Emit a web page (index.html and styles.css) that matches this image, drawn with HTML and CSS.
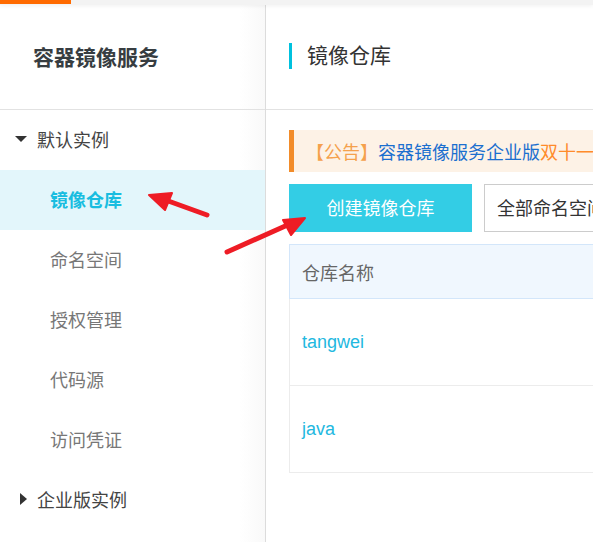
FILE: index.html
```html
<!DOCTYPE html>
<html lang="zh-CN">
<head>
<meta charset="utf-8">
<title>容器镜像服务</title>
<link rel="stylesheet" href="styles.css">
</head>
<body>
<div class="page">
  <div class="topbar"><div class="topbar-accent"></div></div>
  <div class="layout">
    <aside class="sidebar">
      <div class="side-head">容器镜像服务</div>
      <nav class="nav">
        <div class="nav-group"><span class="tri-down"></span>默认实例</div>
        <div class="nav-item active">镜像仓库</div>
        <div class="nav-item">命名空间</div>
        <div class="nav-item">授权管理</div>
        <div class="nav-item">代码源</div>
        <div class="nav-item">访问凭证</div>
        <div class="nav-group"><span class="tri-right"></span>企业版实例</div>
      </nav>
    </aside>
    <main class="main">
      <div class="main-head"><h1 class="main-title">镜像仓库</h1></div>
      <div class="content">
        <div class="notice"><span class="orange">【公告】</span><span class="blue">容器镜像服务企业版</span><span class="orange2">双十一优惠活动进行中</span></div>
        <div class="toolbar">
          <button class="btn-primary">创建镜像仓库</button>
          <div class="select">全部命名空间</div>
        </div>
        <div class="table">
          <div class="th">仓库名称</div>
          <div class="tr"><a class="link">tangwei</a></div>
          <div class="tr"><a class="link">java</a></div>
        </div>
      </div>
    </main>
  </div>
  <svg class="arrows" width="593" height="542" viewBox="0 0 593 542">
    <g fill="#ee1c25" stroke="#ee1c25" stroke-linecap="round" stroke-linejoin="round">
      <line x1="207" y1="215" x2="160" y2="198" stroke-width="5"/>
      <polygon points="149,195 172,193 165,210" stroke-width="2"/>
      <line x1="227" y1="252" x2="292" y2="223" stroke-width="5"/>
      <polygon points="305,218 283,220 291,235" stroke-width="2"/>
    </g>
  </svg>
</div>
</body>
</html>
```
FILE: styles.css
```css
html, body {
  margin: 0;
  padding: 0;
  background: #fff;
}
body {
  font-family: "Liberation Sans", "Noto Sans CJK SC", sans-serif;
  color: #333;
}
.page {
  position: relative;
  width: 593px;
  height: 542px;
  overflow: hidden;
}
.topbar {
  height: 5px;
  background: #f3f3f3;
  box-shadow: 0 1px 4px rgba(0,0,0,0.06);
  position: relative;
  z-index: 1;
}
.topbar-accent {
  width: 71px;
  height: 4px;
  background: #ff6a00;
}
.layout {
  display: flex;
  height: 537px;
}
.sidebar {
  width: 265px;
  flex: none;
  border-right: 1px solid #dcdcdc;
  background: linear-gradient(to right, #fff 0, #fff 240px, #f9f9f9 265px);
}
.side-head {
  height: 105px;
  border-bottom: 1px solid #e2e2e2;
  box-sizing: border-box;
  display: flex;
  align-items: center;
  padding: 0 0 3px 33px;
  font-size: 21px;
  font-weight: bold;
  color: #373d41;
}
.nav {
  display: flex;
  flex-direction: column;
}
.nav-group, .nav-item {
  height: 60px;
  display: flex;
  align-items: center;
  font-size: 18px;
  padding-bottom: 2px;
  box-sizing: border-box;
}
.nav-group {
  color: #444;
}
.nav-item {
  padding-left: 50px;
  color: #777;
}
.nav-item.active {
  background: #e3f6fb;
  color: #19bde0;
  font-weight: bold;
}
.tri-down {
  width: 0;
  height: 0;
  border-left: 6px solid transparent;
  border-right: 6px solid transparent;
  border-top: 6px solid #333;
  margin: 0 10px 0 15px;
}
.tri-right {
  width: 0;
  height: 0;
  border-top: 6px solid transparent;
  border-bottom: 6px solid transparent;
  border-left: 7px solid #333;
  margin: 0 10px 0 20px;
}
.main {
  flex: 1;
  min-width: 0;
}
.main-head {
  height: 105px;
  border-bottom: 1px solid #e2e2e2;
  box-sizing: border-box;
  display: flex;
  align-items: center;
  padding: 0 0 2px 23px;
}
.main-title {
  margin: 0;
  font-size: 21px;
  font-weight: normal;
  color: #333;
  border-left: 3px solid #00c1de;
  padding-left: 15px;
  line-height: 26px;
}
.content {
  padding: 20px 0 0 23px;
  display: flex;
  flex-direction: column;
  align-items: flex-start;
  gap: 12px;
}
.notice {
  height: 42px;
  box-sizing: border-box;
  border-left: 5px solid #f28c2a;
  background: #fdf2e6;
  display: flex;
  align-items: center;
  padding-left: 12px;
  font-size: 18px;
  white-space: nowrap;
  width: 500px;
  flex: none;
}
.orange { color: #f5a14c; }
.blue { color: #1b6fcf; }
.orange2 { color: #ff8b2a; }
.toolbar {
  display: flex;
  gap: 12px;
  height: 48px;
  flex: none;
}
.btn-primary {
  width: 183px;
  flex: none;
  height: 48px;
  border: none;
  background: #33cde5;
  color: #fff;
  font-family: inherit;
  font-size: 18px;
  padding: 0 0 2px;
  white-space: nowrap;
}
.select {
  width: 220px;
  flex: none;
  height: 48px;
  box-sizing: border-box;
  border: 1px solid #cccccc;
  display: flex;
  align-items: center;
  padding: 0 0 2px 12px;
  font-size: 18px;
  color: #333;
  white-space: nowrap;
}
.table {
  width: 500px;
  flex: none;
  display: flex;
  flex-direction: column;
}
.th {
  height: 55px;
  box-sizing: border-box;
  background: #f0f7fe;
  border: 1px solid #d3e6fa;
  display: flex;
  align-items: center;
  padding-left: 12px;
  font-size: 18px;
  color: #666;
}
.tr {
  height: 87px;
  box-sizing: border-box;
  border: 1px solid #ececec;
  border-top: none;
  display: flex;
  align-items: center;
  padding-left: 12px;
  font-size: 18px;
}
.link {
  color: #22b8e0;
  text-decoration: none;
}
.arrows {
  position: absolute;
  left: 0;
  top: 0;
  pointer-events: none;
}
```
